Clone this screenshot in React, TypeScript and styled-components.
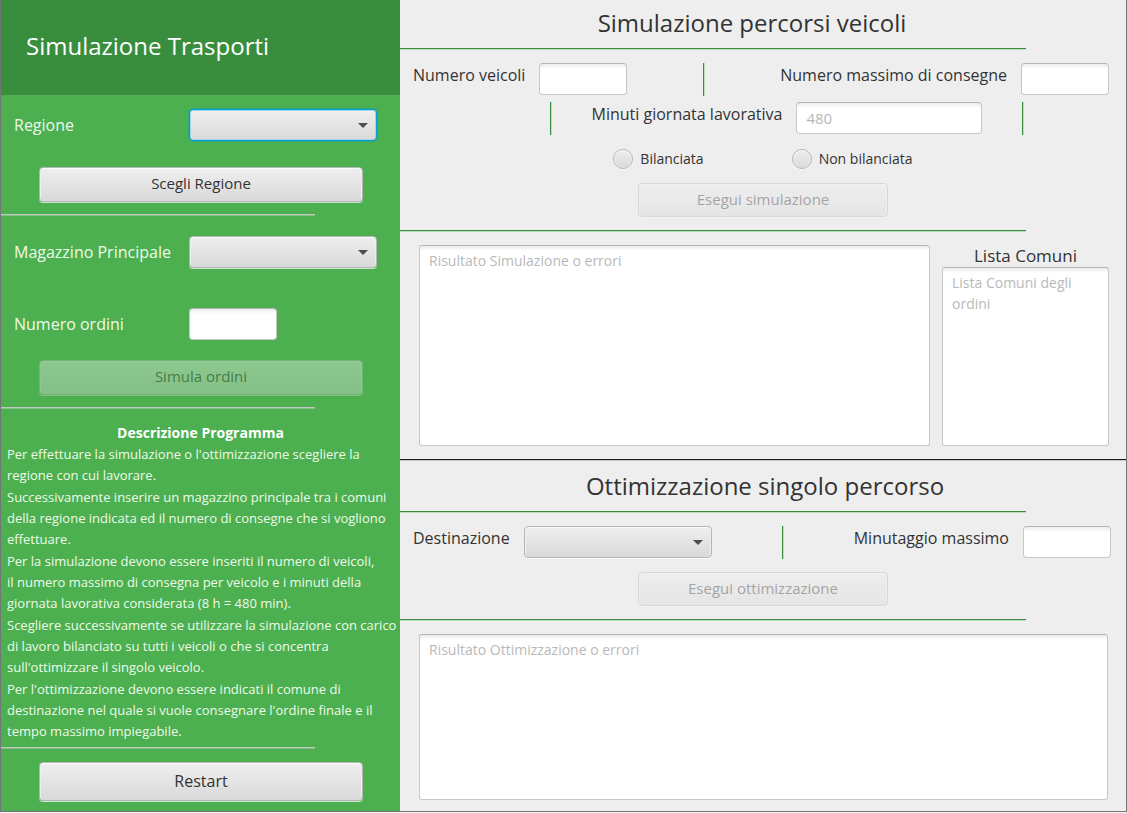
import React from "react";
import styled, { createGlobalStyle, css } from "styled-components";

const GlobalStyle = createGlobalStyle`
  * { box-sizing: border-box; }
  body {
    margin: 0;
    background: #f4f4f4;
    color: #333333;
    font-family: "Open Sans", "Noto Sans", sans-serif;
    font-size: 16px;
    line-height: 24px;
  }
  button, input, select, textarea { font: inherit; color: #333333; margin: 0; }
`;

const Window = styled.div`
  display: grid;
  grid-template-columns: 399px minmax(0, 1fr);
  min-height: calc(100vh - 1px);
  margin-bottom: 1px;
  border: 1px solid #757575;
  border-top: 0;
`;

const Sidebar = styled.aside`
  display: flex;
  flex-direction: column;
  background: #4caf50;
  color: #eefbe9;
`;

const Banner = styled.header`
  height: 95px;
  padding: 30px 25px 0;
  background: #388e3c;
`;

const AppTitle = styled.h1`
  margin: 0;
  font-size: 24px;
  line-height: 32px;
  font-weight: 400;
  color: #fff;
`;

const SideForm = styled.form`
  display: flex;
  flex-direction: column;
`;

const SideField = styled.div`
  display: grid;
  grid-template-columns: 175px auto;
  justify-content: start;
  align-items: center;
  padding: 14px 0 0 13px;
`;

const Label = styled.label`
  white-space: nowrap;
`;

const bevel = css`
  border: 1px solid #b5b5b5;
  border-radius: 4px;
  background: linear-gradient(#efefef, #d9d9d9);
  box-shadow: inset 0 1px 0 #fafafa, inset 1px 0 0 #eeeeee, inset -1px 0 0 #eeeeee, 0 1px 0 rgba(255, 255, 255, 0.7);
`;

const ComboBox = styled.span<{ $focused?: boolean }>`
  ${bevel}
  position: relative;
  display: block;
  width: 188px;
  height: 32px;

  &::after {
    content: "";
    position: absolute;
    right: 8px;
    top: 13px;
    border: 5px solid transparent;
    border-top-color: #4d4d4d;
    border-bottom: 0;
    pointer-events: none;
  }

  ${({ $focused }) =>
    $focused &&
    css`
      border-color: #039ed3;
      box-shadow: inset 0 0 0 1px #a5d5e6, 0 0 0 1px rgba(3, 158, 211, 0.4);
    `}
`;

const Select = styled.select`
  appearance: none;
  display: block;
  width: 100%;
  height: 100%;
  padding: 0 24px 0 8px;
  border: 0;
  outline: 0;
  background: transparent;
  font-size: 15px;
`;

const field = css`
  border: 1px solid #c8c8c8;
  border-top-color: #b5b5b5;
  background: linear-gradient(#ececec, #ffffff 5px);
  outline: 0;
  &::placeholder { color: #b9b9b9; opacity: 1; }
`;

const TextInput = styled.input<{ $wide?: boolean }>`
  ${field}
  width: ${({ $wide }) => ($wide ? 186 : 88)}px;
  height: 32px;
  padding: 0 9px;
  border-radius: 4px;
  font-size: 15px;
`;

const TextArea = styled.textarea`
  ${field}
  display: block;
  flex: 1;
  width: 100%;
  min-height: 80px;
  padding: 4px 9px;
  border-radius: 3px;
  font-size: 14px;
  line-height: 21px;
  resize: none;
`;

const Button = styled.button<{ $large?: boolean }>`
  ${bevel}
  height: ${({ $large }) => ($large ? 39 : 35)}px;
  padding: 0 16px 2px;
  font-size: ${({ $large }) => ($large ? 16 : 15)}px;
  &:disabled { opacity: 0.4; }
`;

const SideButton = styled(Button)`
  margin: 0 37px 0 38px;
  padding-bottom: 4px;
`;

const ScegliButton = styled(SideButton)`
  margin-top: 26px;
  margin-bottom: 12px;
`;

const SimulaButton = styled(SideButton)`
  margin-top: 20px;
  margin-bottom: 12px;
`;

const RestartButton = styled(SideButton)`
  margin-top: 13px;
  padding-bottom: 2px;
`;

const SideRule = styled.hr`
  width: 314px;
  height: 2px;
  margin: 0;
  border: 0;
  border-top: 1px solid #c5c5c5;
  background: #7cc47f;
`;

const MainFields = styled.div`
  display: grid;
  gap: 26px;
  padding: 6px 0 0;
`;

const Description = styled.section`
  padding: 12px 6px 0;
  margin-bottom: 4px;
`;

const DescriptionTitle = styled.h2`
  margin: 0;
  text-align: center;
  font-size: 14px;
  line-height: 23px;
  font-weight: 700;
  color: #fff;
`;

const Paragraph = styled.p`
  margin: 0 0 1px;
  font-size: 13px;
  line-height: 21px;
  white-space: nowrap;
`;

const Content = styled.main`
  display: flex;
  flex-direction: column;
  background: #eeeeee;
`;

const Panel = styled.section`
  display: flex;
  flex-direction: column;
`;

const SimulationPanel = styled(Panel)`
  flex: 1;
`;

const OptimizationPanel = styled(Panel)`
  border-top: 1px solid #1c1c1c;
  box-shadow: inset 0 1px 0 #c4c4c4;
`;

const PanelTitle = styled.h2`
  margin: 0;
  padding: 7px 22px 9px 0;
  text-align: center;
  font-size: 24px;
  line-height: 32px;
  font-weight: 400;
`;

const OptimizationTitle = styled(PanelTitle)`
  padding: 10px 0 9px 4px;
`;

const PanelRule = styled.hr`
  width: 626px;
  max-width: 100%;
  height: 2px;
  margin: 0;
  border: 0;
  border-top: 1px solid #388e3c;
  background: #bcdcbe;
`;

const VerticalRule = styled.span`
  width: 2px;
  height: 33px;
  border-left: 1px solid #388e3c;
  background: #bcdcbe;
`;

const FieldRow = styled.div`
  display: flex;
  justify-content: space-between;
  height: 32px;
  margin: 13px 17px 0 13px;
`;

const MinutesRow = styled(FieldRow)`
  margin: 7px 102px 0 150px;
`;

const RouteRow = styled(FieldRow)`
  margin: 13px 15px 1px 13px;
`;

const Field = styled.div`
  display: flex;
  gap: 14px;
`;

const RadioRow = styled.div`
  display: flex;
  justify-content: center;
  gap: 88px;
  margin-top: 14px;
`;

const RadioLabel = styled.label`
  display: flex;
  align-items: center;
  gap: 7px;
  height: 22px;
  font-size: 14px;
  line-height: 22px;
`;

const Radio = styled.input`
  ${bevel}
  appearance: none;
  width: 20px;
  height: 20px;
  border-radius: 50%;
  &:checked { background: radial-gradient(#333 0 4px, #e4e4e4 5px); }
`;

const RunButton = styled(Button)`
  align-self: center;
  width: 250px;
  height: 34px;
  margin: 13px 0;
`;

const Results = styled.div`
  display: grid;
  grid-template-columns: minmax(0, 511fr) minmax(0, 167fr);
  column-gap: 12px;
  flex: 1;
  padding: 13px 17px 13px 19px;
`;

const Column = styled.div`
  display: flex;
  flex-direction: column;
`;

const ListLabel = styled.label`
  height: 22px;
  line-height: 22px;
  font-size: 17px;
  text-align: center;
`;

const OptimizationResult = styled.div`
  display: flex;
  height: 190px;
  padding: 13px 18px 11px 19px;
`;

export default function App() {
  return (
    <>
      <GlobalStyle />
      <Window>
        <Sidebar>
          <Banner>
            <AppTitle>Simulazione Trasporti</AppTitle>
          </Banner>

          <SideForm onSubmit={(e) => e.preventDefault()}>
            <SideField>
              <Label htmlFor="regione">Regione</Label>
              <ComboBox $focused>
                <Select id="regione" />
              </ComboBox>
            </SideField>
            <ScegliButton>Scegli Regione</ScegliButton>
          </SideForm>
          <SideRule />

          <SideForm onSubmit={(e) => e.preventDefault()}>
            <MainFields>
              <SideField>
                <Label htmlFor="magazzino">Magazzino Principale</Label>
                <ComboBox>
                  <Select id="magazzino" />
                </ComboBox>
              </SideField>
              <SideField>
                <Label htmlFor="ordini">Numero ordini</Label>
                <TextInput id="ordini" />
              </SideField>
            </MainFields>
            <SimulaButton disabled>Simula ordini</SimulaButton>
          </SideForm>
          <SideRule />

          <Description>
            <DescriptionTitle>Descrizione Programma</DescriptionTitle>
            <Paragraph>
              Per effettuare la simulazione o l'ottimizzazione scegliere la
              <br />
              regione con cui lavorare.
            </Paragraph>
            <Paragraph>
              Successivamente inserire un magazzino principale tra i comuni
              <br />
              della regione indicata ed il numero di consegne che si vogliono
              <br />
              effettuare.
            </Paragraph>
            <Paragraph>
              Per la simulazione devono essere inseriti il numero di veicoli,
              <br />
              il numero massimo di consegna per veicolo e i minuti della
              <br />
              giornata lavorativa considerata (8 h = 480 min).
            </Paragraph>
            <Paragraph>
              Scegliere successivamente se utilizzare la simulazione con carico
              <br />
              di lavoro bilanciato su tutti i veicoli o che si concentra
              <br />
              sull'ottimizzare il singolo veicolo.
            </Paragraph>
            <Paragraph>
              Per l'ottimizzazione devono essere indicati il comune di
              <br />
              destinazione nel quale si vuole consegnare l'ordine finale e il
              <br />
              tempo massimo impiegabile.
            </Paragraph>
          </Description>
          <SideRule />
          <RestartButton $large>Restart</RestartButton>
        </Sidebar>

        <Content>
          <SimulationPanel>
            <PanelTitle>Simulazione percorsi veicoli</PanelTitle>
            <PanelRule />
            <FieldRow>
              <Field>
                <Label htmlFor="veicoli">Numero veicoli</Label>
                <TextInput id="veicoli" />
              </Field>
              <VerticalRule />
              <Field>
                <Label htmlFor="consegne">Numero massimo di consegne</Label>
                <TextInput id="consegne" />
              </Field>
            </FieldRow>
            <MinutesRow>
              <VerticalRule />
              <Field>
                <Label htmlFor="minuti">Minuti giornata lavorativa</Label>
                <TextInput id="minuti" placeholder="480" $wide />
              </Field>
              <VerticalRule />
            </MinutesRow>
            <RadioRow>
              <RadioLabel>
                <Radio type="radio" name="carico" value="bilanciata" />
                Bilanciata
              </RadioLabel>
              <RadioLabel>
                <Radio type="radio" name="carico" value="non-bilanciata" />
                Non bilanciata
              </RadioLabel>
            </RadioRow>
            <RunButton disabled>Esegui simulazione</RunButton>
            <PanelRule />
            <Results>
              <Column>
                <TextArea aria-label="Risultato Simulazione" placeholder="Risultato Simulazione o errori" />
              </Column>
              <Column>
                <ListLabel htmlFor="comuni">Lista Comuni</ListLabel>
                <TextArea id="comuni" placeholder="Lista Comuni degli ordini" />
              </Column>
            </Results>
          </SimulationPanel>

          <OptimizationPanel>
            <OptimizationTitle>Ottimizzazione singolo percorso</OptimizationTitle>
            <PanelRule />
            <RouteRow>
              <Field>
                <Label htmlFor="destinazione">Destinazione</Label>
                <ComboBox>
                  <Select id="destinazione" />
                </ComboBox>
              </Field>
              <VerticalRule />
              <Field>
                <Label htmlFor="minutaggio">Minutaggio massimo</Label>
                <TextInput id="minutaggio" />
              </Field>
            </RouteRow>
            <RunButton disabled>Esegui ottimizzazione</RunButton>
            <PanelRule />
            <OptimizationResult>
              <TextArea aria-label="Risultato Ottimizzazione" placeholder="Risultato Ottimizzazione o errori" />
            </OptimizationResult>
          </OptimizationPanel>
        </Content>
      </Window>
    </>
  );
}
